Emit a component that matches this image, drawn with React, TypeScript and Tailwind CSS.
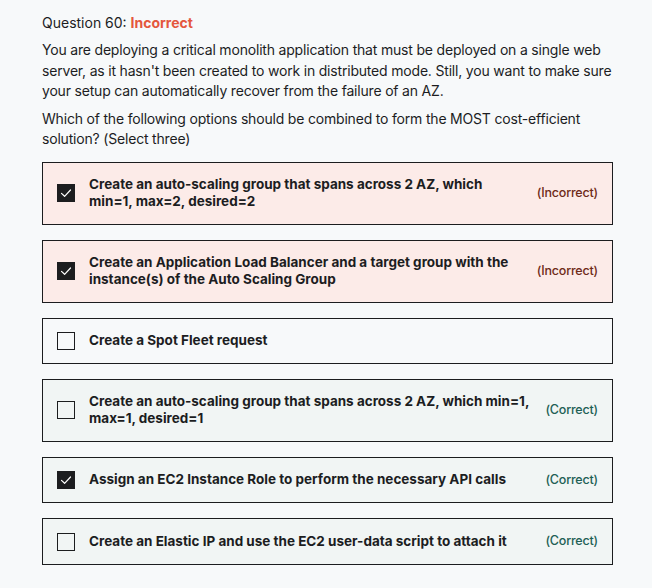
import React from "react"

type Option = {
  text: string
  checked: boolean
  result?: "Correct" | "Incorrect"
}

const options: Option[] = [
  { text: "Create an auto-scaling group that spans across 2 AZ, which min=1, max=2, desired=2", checked: true, result: "Incorrect" },
  { text: "Create an Application Load Balancer and a target group with the instance(s) of the Auto Scaling Group", checked: true, result: "Incorrect" },
  { text: "Create a Spot Fleet request", checked: false },
  { text: "Create an auto-scaling group that spans across 2 AZ, which min=1, max=1, desired=1", checked: false, result: "Correct" },
  { text: "Assign an EC2 Instance Role to perform the necessary API calls", checked: true, result: "Correct" },
  { text: "Create an Elastic IP and use the EC2 user-data script to attach it", checked: false, result: "Correct" },
]

function Checkbox({ checked }: { checked: boolean }) {
  if (checked) {
    return (
      <div className="w-[18px] h-[18px] shrink-0 bg-[#1c1d1f] flex items-center justify-center">
        <svg width="14" height="14" viewBox="0 0 14 14" fill="none">
          <path d="M2.5 7.4 L5.6 10.3 L11.5 4" stroke="white" strokeWidth="1.2" strokeLinecap="round" strokeLinejoin="round" />
        </svg>
      </div>
    )
  }
  return <div className="w-[18px] h-[18px] shrink-0 border border-[#1c1d1f]" />
}

export default function App() {
  return (
    <div
      className="min-h-screen bg-[#f7f9fa] text-[#1c1d1f] pl-[42px] pr-[39px] pt-[13px]"
      style={{ fontFamily: "Inter, 'Noto Sans', sans-serif" }}
    >
      <div className="text-[14px] leading-[20px]">
        Question 60: <span className="font-bold text-[#e4573d]">Incorrect</span>
      </div>

      <p className="mt-[7px] text-[14px] leading-[20.5px] tracking-[-0.19px]">
        You are deploying a critical monolith application that must be deployed on a single web server, as it hasn't been
        created to work in distributed mode. Still, you want to make sure your setup can automatically recover from the
        failure of an AZ.
      </p>
      <p className="mt-[7px] text-[14px] leading-[20.5px] tracking-[-0.19px]">
        Which of the following options should be combined to form the MOST cost-efficient solution? (Select three)
      </p>

      <div className="mt-[12px] flex flex-col gap-[15px]">
        {options.map((o, i) => {
          // background depends on the result
          const bg =
            o.result === "Incorrect" ? "bg-[#fcebe8]" : o.result === "Correct" ? "bg-[#f1f5f4]" : "bg-[#f7f9fa]"
          return (
            <div key={i} className={`border border-[#1c1d1f] ${bg} flex items-center pl-[14px] pr-[14px] py-[13px]`}>
              <Checkbox checked={o.checked} />
              <div className="flex-1 ml-[14px] text-[13.5px] leading-[17.5px] font-bold pr-[12px]">{o.text}</div>
              {o.result && (
                <div
                  className={`shrink-0 text-[12.5px] font-medium tracking-[-0.2px] ${
                    o.result === "Incorrect" ? "text-[#6e2a18]" : "text-[#1e6055]"
                  }`}
                >
                  ({o.result})
                </div>
              )}
            </div>
          )
        })}
      </div>
    </div>
  )
}
